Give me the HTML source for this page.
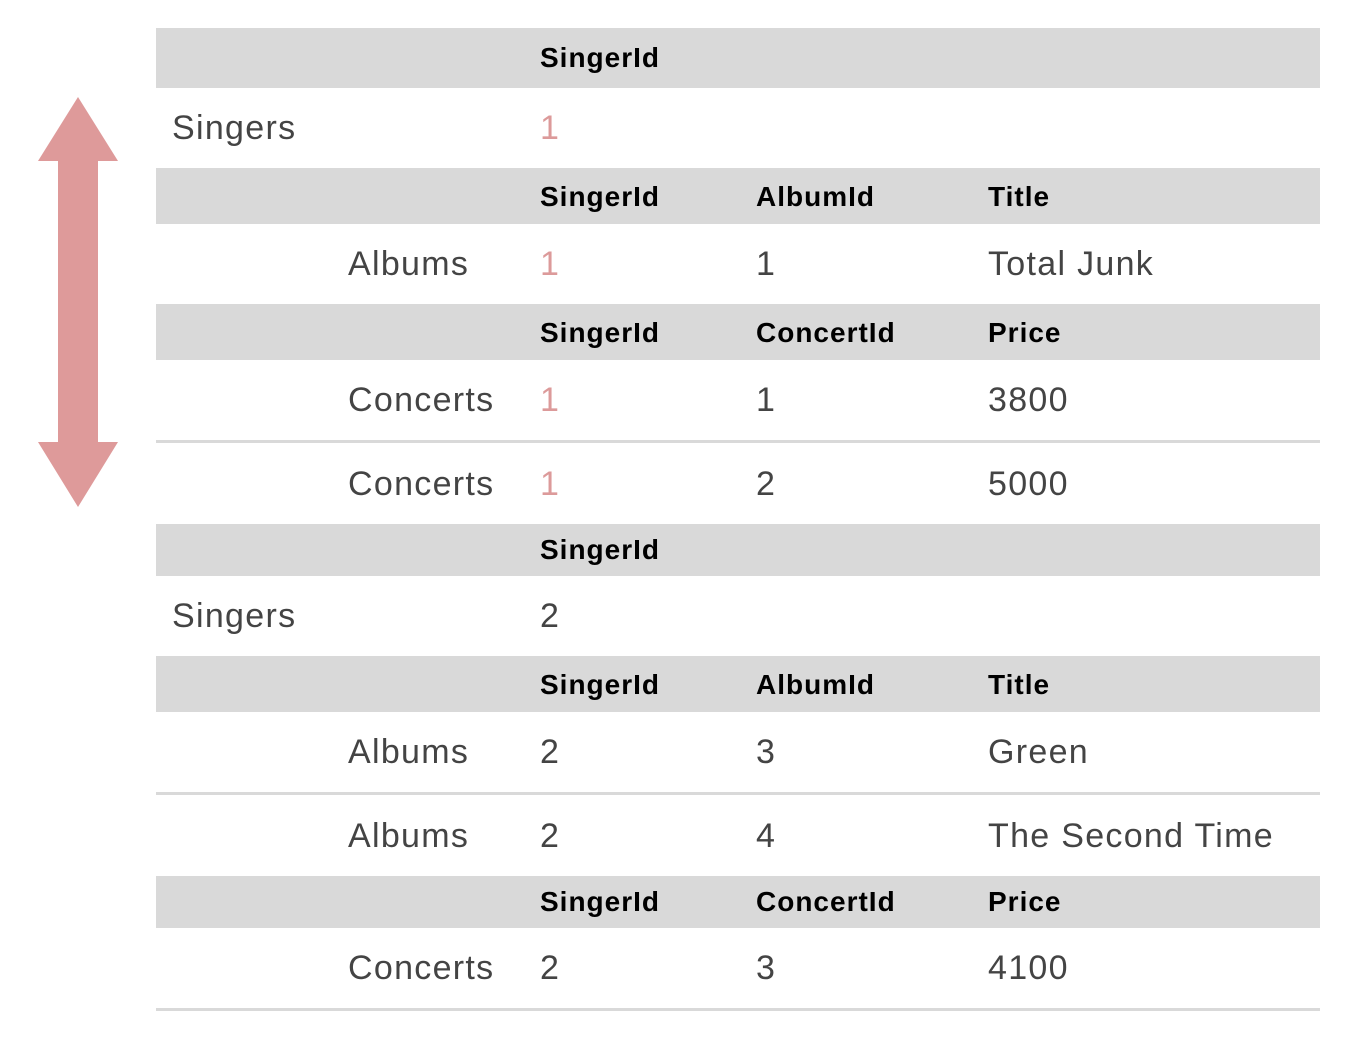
<!DOCTYPE html>
<html><head><style>
body{margin:0;width:1366px;height:1044px;background:#fff;position:relative;font-family:"Liberation Sans",sans-serif;overflow:hidden}
.h{position:absolute;left:156px;width:1164px;background:#d9d9d9}
.l{position:absolute;left:156px;width:1164px;height:3px;background:#d9d9d9}
.t{position:absolute;font-size:34px;letter-spacing:1.3px;color:#444;line-height:1;transform:translateY(-50%)}
.b{position:absolute;font-size:28px;letter-spacing:1px;font-weight:bold;color:#000;line-height:1;transform:translateY(-50%)}
.r{color:#dc9a9a}
</style></head><body>
<svg style="position:absolute;left:0;top:0" width="140" height="520"><polygon points="78,97 118,161 98,161 98,442 118,442 78,507 38,442 58,442 58,161 38,161" fill="#de9a9a"/></svg>

<div class="h" style="top:28px;height:60px"></div>
<div class="b" style="left:540px;top:58px">SingerId</div>
<div class="t" style="left:172px;top:128px">Singers</div><div class="t r" style="left:540px;top:128px">1</div>

<div class="h" style="top:168px;height:56px"></div>
<div class="b" style="left:540px;top:197px">SingerId</div><div class="b" style="left:756px;top:197px">AlbumId</div><div class="b" style="left:988px;top:197px">Title</div>
<div class="t" style="left:348px;top:264px">Albums</div><div class="t r" style="left:540px;top:264px">1</div><div class="t" style="left:756px;top:264px">1</div><div class="t" style="left:988px;top:264px">Total Junk</div>

<div class="h" style="top:304px;height:56px"></div>
<div class="b" style="left:540px;top:333px">SingerId</div><div class="b" style="left:756px;top:333px">ConcertId</div><div class="b" style="left:988px;top:333px">Price</div>
<div class="t" style="left:348px;top:400px">Concerts</div><div class="t r" style="left:540px;top:400px">1</div><div class="t" style="left:756px;top:400px">1</div><div class="t" style="left:988px;top:400px">3800</div>
<div class="l" style="top:440px"></div>
<div class="t" style="left:348px;top:484px">Concerts</div><div class="t r" style="left:540px;top:484px">1</div><div class="t" style="left:756px;top:484px">2</div><div class="t" style="left:988px;top:484px">5000</div>

<div class="h" style="top:524px;height:52px"></div>
<div class="b" style="left:540px;top:550px">SingerId</div>
<div class="t" style="left:172px;top:616px">Singers</div><div class="t" style="left:540px;top:616px">2</div>

<div class="h" style="top:656px;height:56px"></div>
<div class="b" style="left:540px;top:685px">SingerId</div><div class="b" style="left:756px;top:685px">AlbumId</div><div class="b" style="left:988px;top:685px">Title</div>
<div class="t" style="left:348px;top:752px">Albums</div><div class="t" style="left:540px;top:752px">2</div><div class="t" style="left:756px;top:752px">3</div><div class="t" style="left:988px;top:752px">Green</div>
<div class="l" style="top:792px"></div>
<div class="t" style="left:348px;top:836px">Albums</div><div class="t" style="left:540px;top:836px">2</div><div class="t" style="left:756px;top:836px">4</div><div class="t" style="left:988px;top:836px">The Second Time</div>

<div class="h" style="top:876px;height:52px"></div>
<div class="b" style="left:540px;top:902px">SingerId</div><div class="b" style="left:756px;top:902px">ConcertId</div><div class="b" style="left:988px;top:902px">Price</div>
<div class="t" style="left:348px;top:968px">Concerts</div><div class="t" style="left:540px;top:968px">2</div><div class="t" style="left:756px;top:968px">3</div><div class="t" style="left:988px;top:968px">4100</div>
<div class="l" style="top:1008px"></div>
</body></html>
